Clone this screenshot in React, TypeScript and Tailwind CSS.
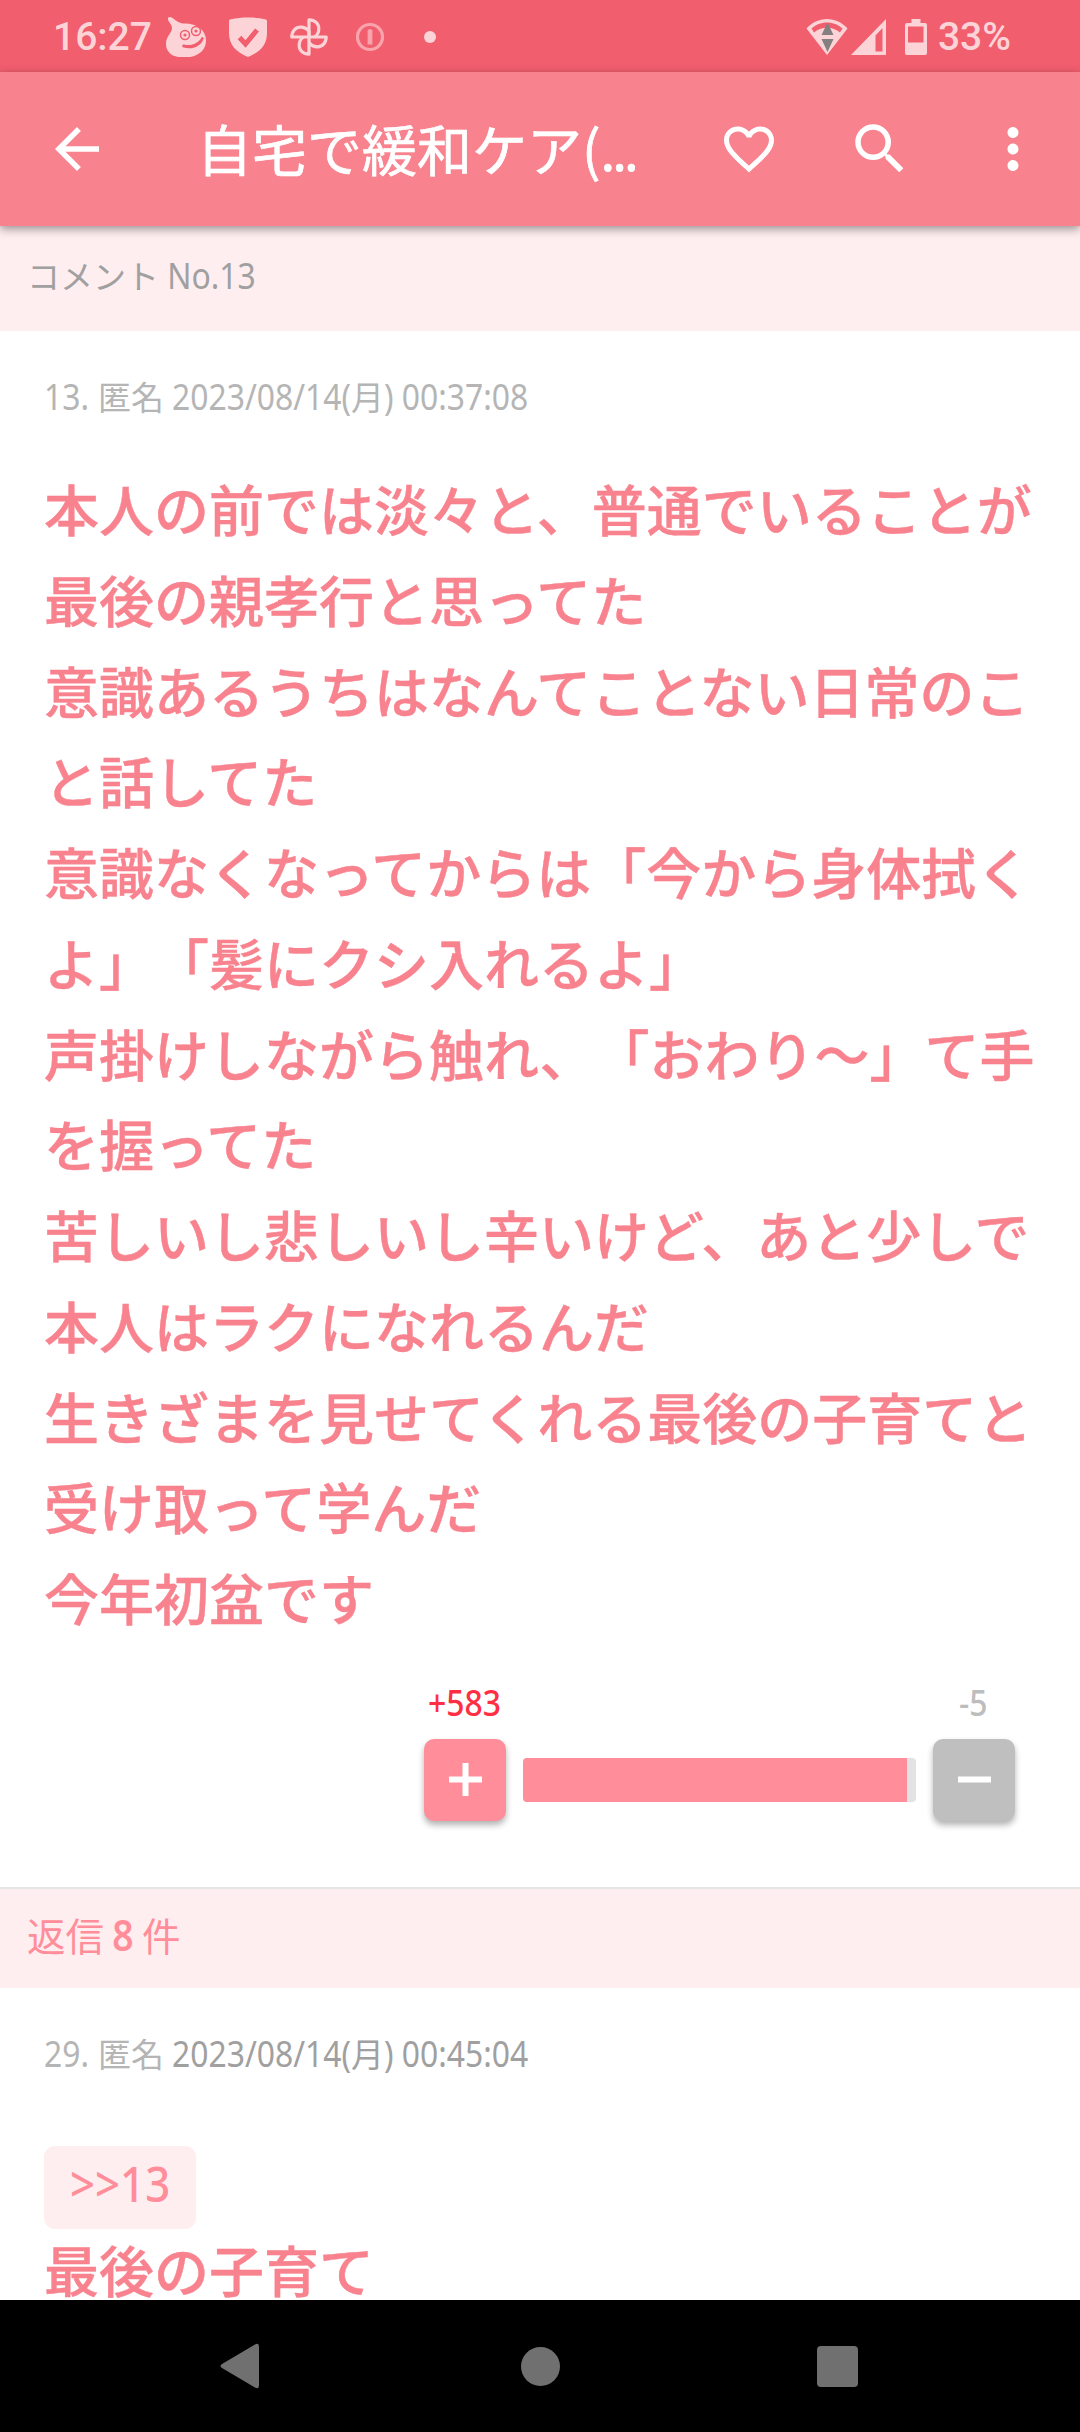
import clsx from "clsx";
import type { ReactNode } from "react";
import { MdArrowBack, MdFavoriteBorder, MdMoreVert, MdSearch } from "react-icons/md";

const comment = [
  "本人の前では淡々と、普通でいることが",
  "最後の親孝行と思ってた",
  "意識あるうちはなんてことない日常のこ",
  "と話してた",
  "意識なくなってからは「今から身体拭く",
  "よ」「髪にクシ入れるよ」",
  "声掛けしながら触れ、「おわり～」て手",
  "を握ってた",
  "苦しいし悲しいし辛いけど、あと少しで",
  "本人はラクになれるんだ",
  "生きざまを見せてくれる最後の子育てと",
  "受け取って学んだ",
  "今年初盆です",
];

const plus = 583;
const minus = 5;

// Latin letters and digits run a little larger and narrower than the kana
function Latin({ className, children }: { className?: string; children: ReactNode }) {
  return (
    <span
      className={clsx(
        "inline-block origin-left scale-x-[0.885] font-['Noto_Sans',sans-serif] text-[36px] leading-none whitespace-pre",
        className
      )}
    >
      {children}
    </span>
  );
}

function StatusBar() {
  return (
    <div className="h-[72px] shrink-0 bg-[#f15e6d] flex items-center pt-px pl-[53px] pr-[69px] text-[#fcd4d8] font-['Roboto',sans-serif] font-medium text-[39px] leading-none">
      <span className="w-[113px] pt-0.5">16:27</span>
      <svg width="40" height="40" viewBox="0 0 40 40" className="mr-[23px]">
        <path
          d="M2 1c1-1.500 3-.8 4.500 0 4 3 7 5.500 12 5.500 13 0 21.500 7 21.500 17C40 34 31 40.500 18 40.500 7 40.500 0 36 0 26.500c0-7 6-10.500 6-15.500C6 7 1 4 2 1z"
          fill="currentColor"
        />
        <g fill="none" stroke="#f15e6d" strokeWidth="1.500">
          <circle cx="19" cy="18" r="4.500" />
          <circle cx="30" cy="14" r="4.500" />
        </g>
        <circle cx="19" cy="18" r="1.600" fill="#f15e6d" />
        <circle cx="30" cy="14" r="1.600" fill="#f15e6d" />
        <path
          d="M18 27.500c7 2 14-1 17.500-7 1-1 2.500 0 2 1.500C35 29.500 26 33 17.500 30.500c-2-.8-1.500-3 .5-3z"
          fill="#f15e6d"
        />
      </svg>
      <svg width="38" height="40" viewBox="0 0 38 40" className="mr-[23px]">
        <path d="M0 4c0-1 .5-1.500 2-1.800 11-2.300 23-2.300 34 0 1.500.3 2 .8 2 1.800v12c0 12-7 19-19 24C7 35 0 28 0 16z" fill="currentColor" />
        <path d="M10.500 20.500l6 6.500L28 13" fill="none" stroke="#f15e6d" strokeWidth="5" />
      </svg>
      <svg width="38" height="38" viewBox="0 0 38 38" fill="none" stroke="currentColor" strokeWidth="3.200" strokeLinejoin="round" className="mr-[27px]">
        <path d="M19 19V1.800c6 0 9.800 4 9.800 8.600 0 3.600-1.600 6.800-4.300 8.600" />
        <path d="M19 19h17.200c0 6-4 9.800-8.600 9.800-3.600 0-6.800-1.600-8.600-4.300" />
        <path d="M19 19v17.200c-6 0-9.800-4-9.800-8.600 0-3.600 1.600-6.800 4.300-8.600" />
        <path d="M19 19H1.800c0-6 4-9.800 8.600-9.800 3.600 0 6.800 1.600 8.600 4.300z" />
      </svg>
      <svg width="30" height="30" viewBox="0 0 30 30" className="mr-[39px] text-[#f9a4ad]">
        <circle cx="15" cy="15" r="12.500" fill="none" stroke="currentColor" strokeWidth="3.200" />
        <circle cx="15" cy="9.500" r="2.500" fill="currentColor" />
        <path d="M12.600 11h4.800v11.500h-4.800z" fill="currentColor" />
      </svg>
      <span className="size-3 rounded-full bg-current" />
      <svg width="42" height="36" viewBox="0 0 42 36" className="ml-auto mr-[3px]">
        <path
          d="M21 0C13 0 6 3.500.5 9.500L21 36 41.500 9.500C36 3.500 29 0 21 0zm0 3.500c6 0 11.500 2.300 15.500 6l-2.500 4c-3.500-3-8-4.800-13-4.800S11.500 10.500 8 13.500l-2.500-4c4-3.700 9.500-6 15.500-6z"
          fill="currentColor"
          fillRule="evenodd"
        />
        <path d="M21.500 3.500l6 12.500h-12zM15.500 20h12l-6 13z" fill="#858080" />
      </svg>
      <svg width="35" height="36" viewBox="0 0 35 36" className="mr-[19px]">
        <path d="M35 0v36H0zM31.500 9l-7 7.500v16h7z" fill="currentColor" fillRule="evenodd" />
      </svg>
      <svg width="22" height="36" viewBox="0 0 22 36" className="mr-[11px]">
        <path d="M6.500 0h9v4H20a2 2 0 012 2v28a2 2 0 01-2 2H2a2 2 0 01-2-2V6a2 2 0 012-2h4.500zM3 7.500v16h15.500v-16z" fill="currentColor" fillRule="evenodd" />
      </svg>
      <span className="pt-0.5">33%</span>
    </div>
  );
}

function AppBar() {
  return (
    <header className="relative z-10 h-[154px] shrink-0 bg-[#f8828e] text-white flex items-center pl-11 pr-[33px] shadow-[0_3px_9px_rgba(0,0,0,0.4)]">
      <MdArrowBack className="size-[66px]" />
      <h1 className="ml-[87px] w-[522px] pb-px text-[55px] leading-[80px] [-webkit-text-stroke:0.7px_white] whitespace-nowrap">
        自宅で緩和ケア(<span className="font-['Noto_Sans',sans-serif] tracking-[-3px]">...</span>
      </h1>
      <MdFavoriteBorder className="size-[60px]" />
      <MdSearch className="ml-[68px] size-[66px]" />
      <MdMoreVert className="ml-[67px] size-[66px]" />
    </header>
  );
}

function Meta({ no, date, time, dark }: { no: number; date: string; time: string; dark?: boolean }) {
  return (
    <p className="h-12 flex items-baseline text-[33px] leading-[48px] whitespace-nowrap text-[#b5b5b5]">
      <Latin className="w-[54px]">{no}.</Latin>
      <span className="w-[74px]">匿名</span>
      <span className={clsx("flex items-baseline", dark && "text-[#a0a0a0]")}>
        <Latin className="w-[179px]">{date}(</Latin>
        <span>月</span>
        <Latin>) {time}</Latin>
      </span>
    </p>
  );
}

function VoteButton({ kind }: { kind: "plus" | "minus" }) {
  return (
    <button
      className={clsx(
        "size-[82px] rounded-[10px] flex items-center justify-center shadow-[0_4px_6px_rgba(0,0,0,0.3)]",
        kind === "plus" ? "bg-[#ff8e9a]" : "bg-[#bfbfbf]"
      )}
    >
      <svg width="33" height="33" viewBox="0 0 33 33" fill="white">
        <path d="M0 13.500h33v6H0z" />
        {kind === "plus" && <path d="M13.500 0h6v33h-6z" />}
      </svg>
    </button>
  );
}

function Votes() {
  return (
    <div className="flex items-end justify-between w-[591px] ml-[424px] mt-[43px]">
      <div className="flex flex-col items-center w-[82px]">
        <span className="h-[54px] pl-[9px] leading-[48px] text-[#ff2e43]">
          <Latin className="font-medium">+{plus}</Latin>
        </span>
        <VoteButton kind="plus" />
      </div>
      <div className="w-[393px] h-11 mb-[19px] rounded bg-[#e3e3e3] overflow-hidden">
        <div className="h-full bg-[#ff8e9a]" style={{ width: `${Math.floor((plus / (plus + minus)) * 986) / 10}%` }} />
      </div>
      <div className="flex flex-col items-center w-[82px]">
        <span className="h-[54px] pl-[2px] leading-[48px] text-[#bdbdbd]">
          <Latin className="font-medium">-{minus}</Latin>
        </span>
        <VoteButton kind="minus" />
      </div>
    </div>
  );
}

function NavBar() {
  return (
    <nav className="h-[132px] shrink-0 bg-black text-[#707070] flex items-center pl-[220px]">
      <svg width="39" height="46" viewBox="0 0 39 46">
        <path d="M2 21L35 1.500q4-2 4 2v39q0 4-4 2L2 25q-3-2 0-4z" fill="currentColor" />
      </svg>
      <span className="ml-[262px] size-[39px] rounded-full bg-current" />
      <span className="ml-[257px] size-[41px] rounded-[4px] bg-current" />
    </nav>
  );
}

export default function App() {
  return (
    <div
      lang="ja"
      className="w-[1080px] h-[2432px] flex flex-col overflow-hidden bg-white font-['Noto_Sans_CJK_JP',sans-serif] [text-spacing-trim:space-all]"
    >
      <StatusBar />
      <AppBar />
      <main className="flex-1 min-h-0">
        <div className="h-[105px] bg-[#ffeef0] pl-[27px] pt-[25px] text-[33px] leading-[48px] text-[#a0a0a0]">
          コメント<Latin> No.13</Latin>
        </div>
        <article className="h-[1556px] pt-[41px]">
          <div className="px-11">
            <Meta no={13} date="2023/08/14" time="00:37:08" />
            <div className="mt-[42px] text-[55px] leading-[90.75px] font-medium text-[#f8828e] [-webkit-text-stroke:0.4px_#f8828e] whitespace-nowrap">
              {comment.map((line) => (
                <p key={line}>{line}</p>
              ))}
            </div>
          </div>
          <Votes />
        </article>
        <div className="h-[101px] border-t-2 border-[#e5e5e5] bg-[#ffeef0] pl-[27px] pt-[17px] text-[38.500px] leading-[56px] text-[#ff8e9a]">
          返信
          <span className="inline-block w-[38px] text-center scale-x-[0.85] font-['Noto_Sans',sans-serif] font-semibold text-[44px] leading-none">
            8
          </span>
          件
        </div>
        <article className="px-11 pt-[41px]">
          <Meta no={29} date="2023/08/14" time="00:45:04" dark />
          <div className="mt-[69px] w-[152px] h-[83px] rounded-[11px] bg-[#ffeef0] pl-[26px] pt-[13px] text-[#ff8e9a]">
            <Latin className="scale-x-[0.86] text-[49.500px] font-medium">&gt;&gt;13</Latin>
          </div>
          <p className="mt-[9px] text-[55px] leading-[60px] font-medium text-[#f8828e] [-webkit-text-stroke:0.4px_#f8828e]">
            最後の子育て
          </p>
        </article>
      </main>
      <NavBar />
    </div>
  );
}
